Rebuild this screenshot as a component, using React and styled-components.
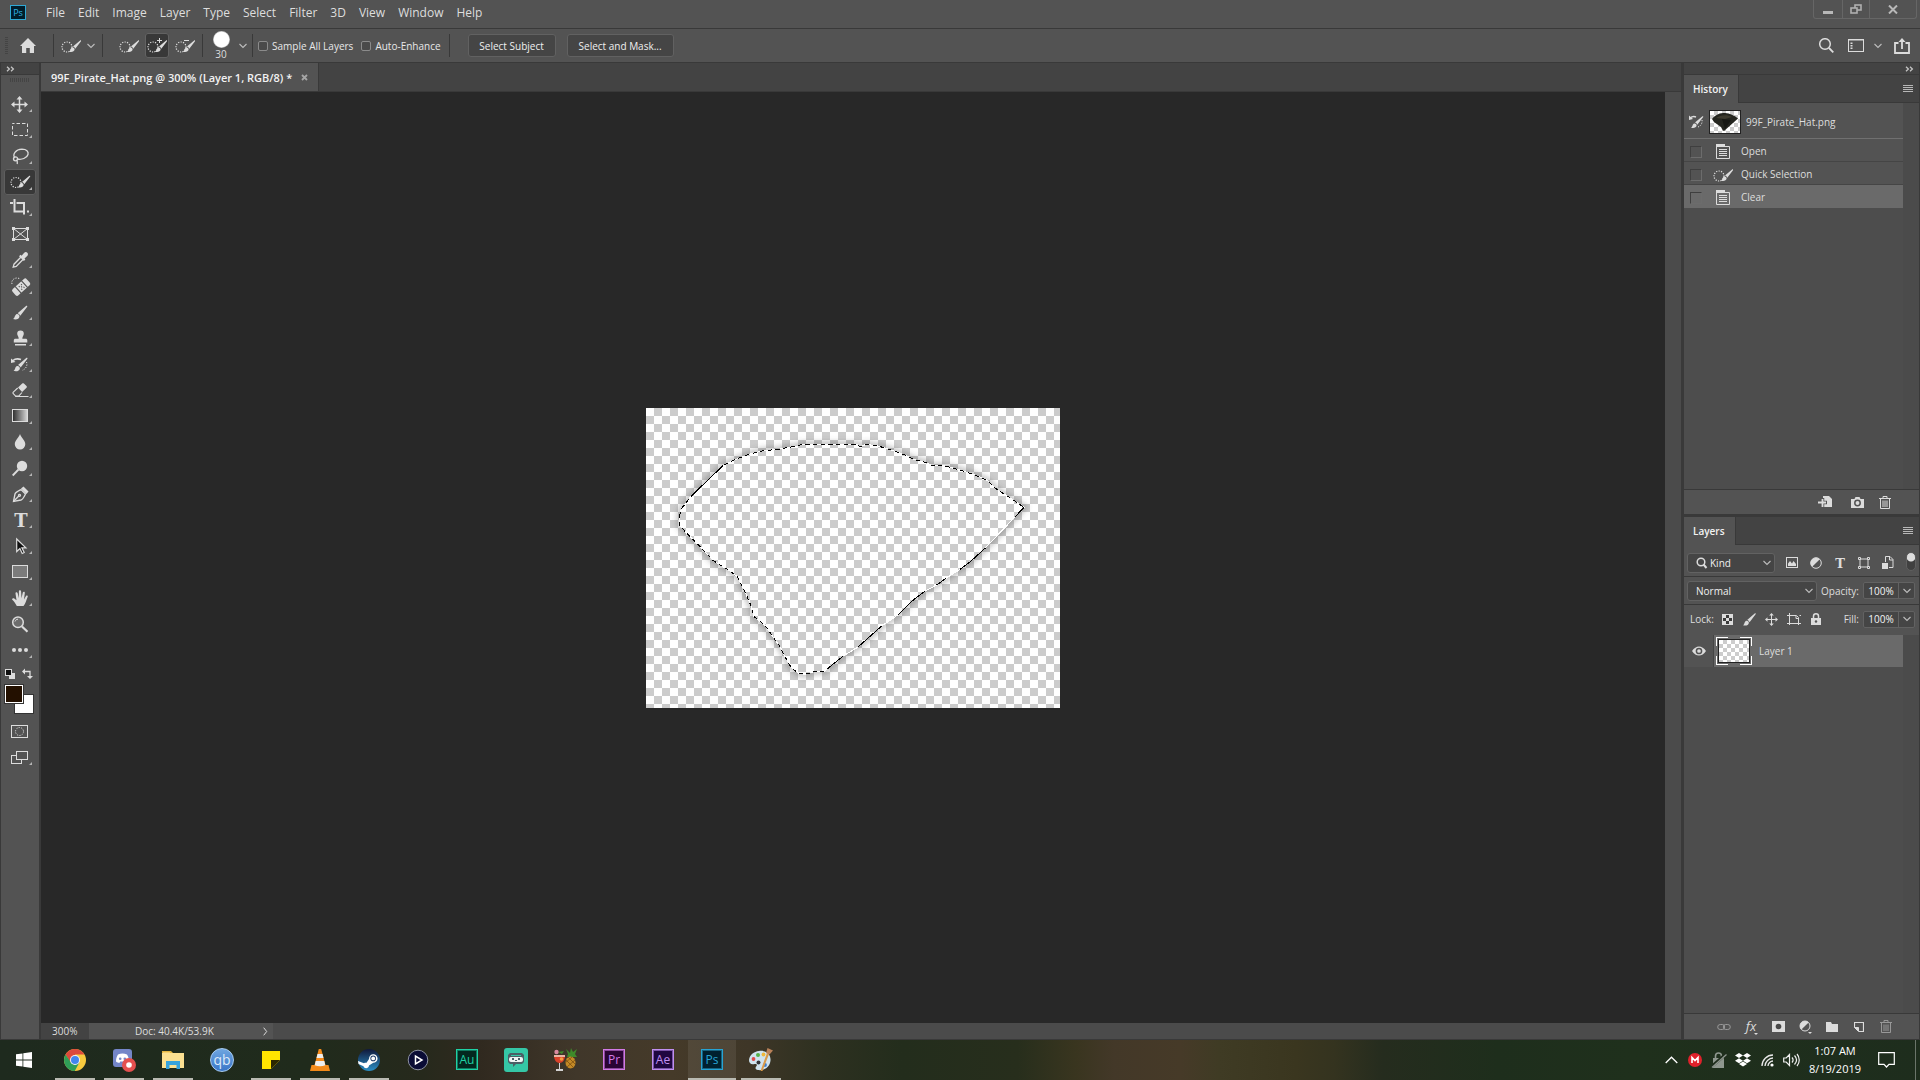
import React from "react";
import styled, { createGlobalStyle, css } from "styled-components";

const c = {
  bar: "#535353",
  header: "#434343",
  line: "#393939",
  trough: "#4b4b4b",
  well: "#4d4d4d",
  field: "#454545",
  text: "#dedede",
  icon: "#dcdcdc",
  pressed: "#383838",
  selected: "#6a6a6a",
  stage: "#282828",
};

const Global = createGlobalStyle`
  *, *::before, *::after { box-sizing: border-box; }
  html, body, #root { height: 100%; }
  body {
    margin: 0;
    overflow: hidden;
    background: ${c.stage};
    color: ${c.text};
    font: 10px/16px "Open Sans", "Noto Sans", sans-serif;
  }
  button, input, select { font: inherit; color: inherit; margin: 0; padding: 0; border: 0; background: none; outline: 0; }
  svg { display: block; flex: none; }
  ul { list-style: none; margin: 0; padding: 0; }
`;

const checker = css`
  background: repeating-conic-gradient(#ccc 0 25%, #fff 0 50%) 0 0 / ${(p) => p.$cell * 2}px ${(p) => p.$cell * 2}px;
`;

/* ---------- shell ---------- */
const Shell = styled.div`
  height: 100vh;
  display: flex;
  flex-direction: column;
`;
const Workspace = styled.div`
  flex: 1;
  min-height: 0;
  display: flex;
  background: ${c.line};
  border-bottom: 1px solid ${c.line};
`;
const IconButton = styled.button`
  display: flex;
  align-items: center;
  justify-content: center;
  flex: none;
  width: ${(p) => p.$w || 24}px;
  height: ${(p) => p.$h || 24}px;
  opacity: ${(p) => (p.$dim ? 0.5 : 1)};
`;

/* ---------- menu bar ---------- */
const MenuBar = styled.header`
  height: 29px;
  flex: none;
  display: flex;
  background: ${c.bar};
  border-bottom: 1px solid ${c.line};
`;
const AppBadge = styled.span`
  display: grid;
  place-items: center;
  width: 16px;
  height: 15px;
  margin: 5px 20px 0 10px;
  border: 1px solid #2fa8d5;
  background: #001d2b;
  color: #31b5e6;
  font-size: 9px;
  line-height: 12px;
`;
const Menus = styled.nav`
  display: flex;
  align-items: flex-start;
  gap: 13px;
  padding-top: 4px;
  flex: 1;
  font-size: 12px;
  line-height: 17px;
`;
const WindowControls = styled.div`
  display: flex;
  height: 19px;
  margin-right: 3px;
  border: 1px solid #666;
  border-top: 0;
  border-radius: 0 0 3px 3px;
`;
const WindowButton = styled(IconButton)`
  height: 18px;
  & + & { border-left: 1px solid #666; }
`;

/* ---------- options bar ---------- */
const OptionsBar = styled.div`
  height: 34px;
  flex: none;
  display: flex;
  align-items: center;
  padding-left: 5px;
  background: ${c.bar};
  border-bottom: 1px solid ${c.line};
`;
const Grip = styled.span`
  flex: none;
  width: 3px;
  height: 18px;
  background: repeating-linear-gradient(#444 0 1px, transparent 1px 2px);
`;
const ToolGrip = styled.span`
  flex: none;
  width: 20px;
  height: 4px;
  margin-top: 3px;
  background: repeating-linear-gradient(to right, #444 0 1px, transparent 1px 2px);
`;
const Divider = styled.span`
  flex: none;
  width: 1px;
  height: 23px;
  margin-left: ${(p) => p.$ml || 0}px;
  background: ${c.line};
`;
const ModeButton = styled(IconButton)`
  width: 24px;
  height: 25px;
  border-radius: 3px;
  ${(p) => p.$on && css`background: ${c.pressed}; box-shadow: inset 0 0 0 1px #626262;`}
`;
const BrushSize = styled.button`
  width: 36px;
  display: flex;
  flex-direction: column;
  align-items: center;
  line-height: 13px;
  &::before {
    content: "";
    width: 17px;
    height: 17px;
    border-radius: 50%;
    background: radial-gradient(circle, #fff 60%, #ffffff66 74%);
  }
`;
const Check = styled.label`
  display: flex;
  align-items: center;
  gap: 4px;
  margin-right: 8px;
  color: #e8e8e8;
  input {
    appearance: none;
    width: 10px;
    height: 10px;
    border: 1px solid #8b8b8b;
    border-radius: 2px;
    background: #4a4a4a;
  }
`;
const TextButton = styled.button`
  width: ${(p) => p.$w}px;
  height: 23px;
  border: 1px solid #616161;
  border-radius: 3px;
  background: ${c.field};
  color: #f0f0f0;
`;
const Push = styled.span`
  flex: 1;
`;
const Row = styled.div`
  display: flex;
  align-items: center;
  gap: ${(p) => p.$gap || 0}px;
  padding: 0 ${(p) => p.$pr ?? p.$px ?? 0}px 0 ${(p) => p.$px || 0}px;
`;

/* ---------- tools ---------- */
const ToolPanel = styled.aside`
  width: 38px;
  flex: none;
  display: flex;
  flex-direction: column;
  align-items: center;
  margin: 0 1px;
  background: ${c.bar};
`;
const Collapse = styled.button`
  width: 100%;
  height: 12px;
  flex: none;
  display: flex;
  align-items: center;
  justify-content: ${(p) => (p.$end ? "flex-end" : "flex-start")};
  padding: 0 5px;
  background: ${c.header};
  border-bottom: 1px solid ${c.line};
`;
const ToolList = styled.div`
  display: flex;
  flex-direction: column;
  padding-top: 9px;
`;
const Tool = styled.button`
  width: 32px;
  height: 26px;
  ${(p) => p.$on && css`
    background: ${c.pressed};
    box-shadow: inset 0 0 0 1px #5e5e5e;
    border-radius: 3px;
  `}
`;
const MiniRow = styled.div`
  width: 32px;
  height: 21px;
  display: flex;
  align-items: center;
  justify-content: space-between;
  padding: 0 3px 0 0;
`;
const Swatches = styled.div`
  position: relative;
  width: 32px;
  height: 34px;
`;
const Swatch = styled.button`
  position: absolute;
  width: 20px;
  height: 20px;
  top: ${(p) => (p.$front ? 0 : 10)}px;
  left: ${(p) => (p.$front ? 0 : 10)}px;
  background: ${(p) => p.$color};
  border: 1px solid #333;
  box-shadow: inset 0 0 0 1px #fff;
`;

/* ---------- document ---------- */
const Document = styled.main`
  flex: 1;
  min-width: 0;
  display: flex;
  flex-direction: column;
  margin: 0 3px 0 1px;
`;
const TabStrip = styled.div`
  height: ${(p) => p.$h}px;
  flex: none;
  display: flex;
  background: ${c.header};
  border-bottom: 1px solid ${c.line};
`;
const Tab = styled.div`
  display: flex;
  align-items: center;
  gap: 9px;
  padding: 1px 10px 0;
  background: ${c.bar};
  border-right: 1px solid ${c.line};
  color: #f2f2f2;
  font-weight: 600;
  font-size: 11px;
`;
const PanelTab = styled.h2`
  display: flex;
  align-items: center;
  margin: 0 0 -1px;
  padding: 0 10px 1px 9px;
  background: ${c.bar};
  border-right: 1px solid ${c.line};
  color: #f2f2f2;
  font-weight: 600;
  font-size: 10px;
`;
const Stage = styled.div`
  flex: 1;
  min-height: 0;
  display: flex;
  background: ${c.stage};
`;
const Viewport = styled.div`
  flex: 1;
  display: flex;
  align-items: center;
  justify-content: center;
`;
const Artboard = styled.div`
  width: 414px;
  height: 300px;
  ${checker}
`;
const ScrollTrack = styled.div`
  width: 16px;
  flex: none;
  background: ${c.trough};
`;
const StatusBar = styled.footer`
  height: 16px;
  flex: none;
  display: flex;
  background: ${c.trough};
`;
const ZoomField = styled.input`
  width: 48px;
  padding-left: 11px;
  background: ${c.header};
`;
const DocInfo = styled.button`
  width: 184px;
  display: flex;
  align-items: center;
  justify-content: space-between;
  padding: 0 5px 0 46px;
  background: ${c.bar};
`;

/* ---------- right docks ---------- */
const Dock = styled.aside`
  width: 236px;
  flex: none;
  display: flex;
  flex-direction: column;
  border-right: 1px solid ${c.line};
`;
const Panel = styled.section`
  display: flex;
  flex-direction: column;
  flex: ${(p) => p.$grow};
  min-height: 0;
  background: ${c.bar};
  margin-bottom: ${(p) => p.$gap || 0}px;
`;
const ListWell = styled.div`
  flex: 1;
  min-height: 0;
  display: flex;
  background: ${c.well};
`;
const List = styled.ul`
  flex: 1;
`;
const Snapshot = styled.li`
  height: 36px;
  display: flex;
  align-items: center;
  gap: 5px;
  padding: 2px 0 0 5px;
  background: ${c.bar};
  border-bottom: 1px solid #707070;
`;
const State = styled.li`
  height: 23px;
  display: flex;
  align-items: center;
  padding: 3px 0 0 6px;
  background: ${(p) => (p.$on ? c.selected : c.bar)};
  border-bottom: 1px solid ${(p) => (p.$on ? c.selected : "#454545")};
  input {
    appearance: none;
    width: 12px;
    height: 12px;
    margin-right: 11px;
    border: 1px solid #6c6c6c;
    border-left-color: #3f3f3f;
    border-top-color: #3f3f3f;
  }
  label { padding: 0 0 2px 8px; }
`;
const Thumb = styled.span`
  display: grid;
  place-items: center;
  width: 32px;
  height: 24px;
  border: 1px solid #222;
  ${checker}
`;
const PanelFooter = styled.footer`
  height: ${(p) => p.$h}px;
  flex: none;
  display: flex;
  align-items: center;
  justify-content: flex-end;
  gap: ${(p) => p.$gap}px;
  padding-right: ${(p) => p.$pr}px;
  border-top: 1px solid ${c.line};
`;
const ControlRow = styled.div`
  height: ${(p) => p.$h}px;
  flex: none;
  display: flex;
  align-items: center;
  padding: ${(p) => p.$pt || 0}px 4px ${(p) => p.$pb || 0}px 3px;
  border-bottom: ${(p) => (p.$plain ? "0" : `1px solid ${c.line}`)};
`;
const SelectBox = styled.label`
  width: ${(p) => p.$w}px;
  height: 20px;
  flex: none;
  display: flex;
  align-items: center;
  gap: ${(p) => p.$gap || 0}px;
  padding: 0 3px 0 8px;
  background: ${c.field};
  border: 1px solid #626262;
  border-radius: 3px;
  select {
    appearance: none;
    flex: 1;
    min-width: 0;
    height: 18px;
    color: #f0f0f0;
  }
`;
const FieldLabel = styled.label`
  flex: 1;
  text-align: right;
  padding-right: 4px;
`;
const NumberBox = styled.span`
  width: 52px;
  height: 17px;
  flex: none;
  display: flex;
  background: ${c.field};
  border: 1px solid #626262;
  border-radius: 2px;
  input {
    width: 35px;
    text-align: center;
    color: #f4f4f4;
    border-right: 1px solid #626262;
  }
  button { width: 15px; display: grid; place-items: center; }
`;
const Toggle = styled.input`
  && {
    appearance: none;
    flex: none;
    width: 10px;
    height: 19px;
    margin: 0 0 3px 6px;
    border-radius: 5px;
    border: 1px solid #606060;
    background: radial-gradient(circle at 4px 4px, #dedede 4px, transparent 5px) #404040;
  }
`;
const LayerRow = styled.li`
  height: 32px;
  display: flex;
  background: ${c.selected};
`;
const EyeCell = styled(IconButton)`
  width: 30px;
  height: 32px;
  background: ${c.bar};
  border-right: 1px solid #454545;
`;
const LayerThumb = styled.span`
  display: grid;
  place-items: center;
  width: 36px;
  height: 28px;
  margin: 2px 7px 2px 2px;
  background:
    linear-gradient(#fff, #fff) 0 0 / 12px 1px, linear-gradient(#fff, #fff) 100% 0 / 12px 1px,
    linear-gradient(#fff, #fff) 0 100% / 12px 1px, linear-gradient(#fff, #fff) 100% 100% / 12px 1px,
    linear-gradient(#fff, #fff) 0 0 / 1px 9px, linear-gradient(#fff, #fff) 100% 0 / 1px 9px,
    linear-gradient(#fff, #fff) 0 100% / 1px 9px, linear-gradient(#fff, #fff) 100% 100% / 1px 9px;
  background-repeat: no-repeat;
`;
const LayerName = styled.span`
  align-self: center;
`;

/* ---------- taskbar ---------- */
const Taskbar = styled.footer`
  height: 40px;
  flex: none;
  display: flex;
  color: #fff;
  background: linear-gradient(to right,
    #1e2a1e 0, #202b1c 16%, #26291c 22%, #30291f 25%, #40372a 30%, #453a29 35%, #3e3627 39%,
    #2d3020 43%, #232d1c 47%, #272e1c 53%, #39351f 56%, #433828 58%, #463a28 61.5%, #3f3b24 63.5%,
    #3a361f 67.5%, #34331f 69.5%, #252c1e 72%, #1e2e1c 78%, #1f301c 85%, #1e2d1d 100%);
`;
const TaskButton = styled.button`
  width: 48px;
  height: 40px;
  flex: none;
  display: grid;
  place-items: center;
  margin-right: ${(p) => (p.$start ? 3 : 1)}px;
  background:
    linear-gradient(#b9bab2, #b9bab2) center bottom / ${(p) => (p.$active ? 48 : p.$open ? 40 : 0)}px 2px no-repeat
    ${(p) => (p.$active ? "#ffffff14" : "transparent")};
`;
const AdobeTile = styled.span`
  display: grid;
  place-items: center;
  width: 22px;
  height: 21px;
  margin-top: -2px;
  border: 1px solid ${(p) => p.$color};
  box-shadow: inset 0 0 0 1px ${(p) => p.$edge};
  background: ${(p) => p.$bg};
  color: ${(p) => p.$color};
  font-size: 12px;
  line-height: 17px;
`;
const QbTile = styled.span`
  display: grid;
  place-items: center;
  width: 24px;
  height: 24px;
  border-radius: 50%;
  border: 1px solid #a9cdf2;
  background: linear-gradient(#6fa6e0, #3a76c8);
  color: #dcebfa;
  font-size: 14px;
  line-height: 18px;
`;
const Clock = styled.button`
  width: 64px;
  font-size: 11px;
  line-height: 18px;
  text-align: center;
`;
const TrayEnd = styled.span`
  width: 5px;
  margin-left: 10px;
  border-left: 1px solid #6b756a;
`;

/* ---------- icon drawings ---------- */
const Draw = ({ w, h, children, ...rest }) => (
  <svg width={w} height={h} viewBox={`0 0 ${w} ${h}`} fill="none" stroke={c.icon} aria-hidden="true" {...rest}>
    {children}
  </svg>
);
const solid = { fill: c.icon, stroke: "none" };

const Chevron = () => (
  <Draw w={8} h={6} stroke="#bdbdbd">
    <path d="M.5 1 4 4.500 7.500 1" strokeWidth="1.100" />
  </Draw>
);
const Collapser = () => (
  <Draw w={9} h={6} stroke="#c4c4c4">
    <path strokeWidth="1.300" d="M1 .7 3.400 3 1 5.300M5 .7 7.400 3 5 5.300" />
  </Draw>
);
const PanelMenu = () => (
  <Draw w={10} h={8} stroke="#b8b8b8"><path d="M0 .5h10M0 2.500h10M0 4.500h10M0 6.500h10" /></Draw>
);

/* A paint brush: bristles at the lower left, handle pointing up and right. */
const BrushShape = ({ x = 0, y = 0, s = 1 }) => (
  <g transform={`translate(${x} ${y}) scale(${s})`} {...solid}>
    <path d="M0 13.600c1.800-.6 1.400-3.400 3-4.600 1.500-1.100 3.600.2 3.500 2.100-.2 2.500-3.500 3.600-6.500 2.500z" />
    <path d="M4.600 7.700 13.300.3c.7-.3 1.200.3.9.9L7.300 10.200C6.800 9 5.900 8.100 4.600 7.700z" />
  </g>
);
const QuickSelect = ({ sign }) => (
  <Draw w={20} h={16}>
    <circle cx="6" cy="9" r="5" strokeDasharray="1.200 1.300" strokeWidth="1.200" />
    <BrushShape x={8} y={2} s={0.86} />
    {sign && <path d={sign === "+" ? "M12.500 0v5M10 2.500h5" : "M9 2.500h5"} />}
  </Draw>
);
const DocPage = () => (
  <Draw w={14} h={15}>
    <path {...solid} d="M0 0h9v3H0z" />
    <path d="M.5.5v14h13v-12H1M3 5.500h8M3 7.500h8M3 9.500h8M3 11.500h8" />
  </Draw>
);
const Trash = () => (
  <Draw w={12} h={13}>
    <path d="M0 2.500h12M4 2V.5h4V2M1.500 3v9.500h9V3M4 4.500v6.500M6 4.500v6.500M8 4.500v6.500" />
  </Draw>
);
const Letter = ({ x, y, size }) => (
  <text x={x} y={y} fill={c.icon} stroke="none" fontSize={size} fontWeight="700" textAnchor="middle" fontFamily="DejaVu Serif">T</text>
);

/* Every tool drawing is laid out on a 32 x 26 cell. */
const toolArt = {
  Move: (
    <g><path d="M8.500 13.500h14M15.500 6.500v14" strokeWidth="1.500" />
      <path {...solid} d="m15.500 5 3 3.500h-6zM15.500 22l3-3.500h-6zM7 13.500l3.500-3v6zM24 13.500l-3.500-3v6z" /></g>
  ),
  Marquee: <rect x="8.500" y="6.500" width="15" height="12" strokeDasharray="3.500 2" strokeDashoffset="1.500" />,
  Lasso: (
    <g strokeWidth="1.300"><path d="M11 15c-3-3.500.5-8.500 7-8.800 4.500 0 6.800 2.500 6 5.300-1 3.700-6.500 5.500-10.500 4.500" />
      <circle cx="11.500" cy="15.800" r="2" /><path d="M12.500 17c1.200 1.200 1 2.500.7 4" /></g>
  ),
  "Quick Selection": (
    <g><circle cx="12" cy="13.500" r="5" strokeDasharray="1.200 1.300" strokeWidth="1.200" /><BrushShape x={14} y={6.500} s={0.86} /></g>
  ),
  Crop: <g strokeWidth="2"><path d="M6 8h3M10.500 4v12.500H21M12.500 8H20v11.500M23 16.500h2" /></g>,
  Frame: (
    <g><rect x="9.500" y="7.500" width="14" height="11" /><path d="m9.500 7.500 14 11M23.500 7.500l-14 11" />
      <path {...solid} d="M8 6h3v3H8zM22 6h3v3h-3zM8 17h3v3H8zM22 17h3v3h-3z" /></g>
  ),
  Eyedropper: (
    <g><path d="m17.500 9.500-7.500 7.700-.8 3 3-.8 7.500-7.600" strokeWidth="1.300" />
      <path {...solid} d="M15 9.300 16.600 7.800l1 .9 2.400-2.800c2.500-2.300 5.300.8 3.200 3.100L20.500 11.400l.9 1.100-1.500 1.400z" /></g>
  ),
  Healing: (
    <g><g transform="rotate(-42 17 14)"><rect x="7.500" y="10" width="19" height="8.500" rx="2" {...solid} />
      <path d="M13 9.500v9.500M21.500 9.500v9.500" stroke={c.bar} strokeWidth="1.200" />
      <path d="M15.500 12.500h1M18.500 12.500h1M17 14.300h1M15.500 16.200h1M18.500 16.200h1" stroke={c.bar} strokeWidth="1.400" /></g>
      <path d="M8 11c-1-3 1.500-6 5-6 1.200 0 2.500.5 3.200 1.200" strokeDasharray="1.200 1.300" /></g>
  ),
  Brush: <BrushShape x={9} y={6.500} s={1} />,
  Stamp: (
    <path {...solid} d="M16.500 5.500a3.300 3.300 0 0 1 3.300 3.300c0 1.700-1.500 2.600-1.500 5h3.200c1.200 0 1.800.6 1.800 1.800v1.900H9.800v-1.900c0-1.200.6-1.800 1.800-1.800h3.100c0-2.400-1.500-3.300-1.500-5a3.300 3.300 0 0 1 3.300-3.300zM11 19h11v1.500H11z" />
  ),
  "History Brush": (
    <g><BrushShape x={9.500} y={6.500} s={0.98} /><path d="M9 9.500c2-1.800 5-2 8-1" strokeWidth="1.600" /><path {...solid} d="M7 7.500v4.500l4.500-1z" />
      <path d="M22.500 11c1 2.500.5 6.500-4.500 8.500" strokeDasharray="1.200 1.400" /></g>
  ),
  Eraser: (
    <g><path {...solid} d="m14 10.500 4.200-4c.5-.5 1.200-.5 1.700 0l2.600 2.600c.5.5.5 1.200 0 1.700l-4.400 4.200z" />
      <path d="m13.700 11-4.400 4.200c-.5.5-.5 1 0 1.500l2.400 2.400h3l3.300-3.600M11 19.500h13.500" strokeWidth="1.100" /></g>
  ),
  Gradient: (
    <g><defs><linearGradient id="ramp"><stop stopColor="#2b2b2b" /><stop offset="1" stopColor="#d8d8d8" /></linearGradient></defs>
      <rect x="8.500" y="6.500" width="15" height="12" fill="url(#ramp)" /></g>
  ),
  Blur: <path {...solid} d="M16 5c1 3.500 5.300 6.500 5.300 10.200a5.200 5.200 0 0 1-10.500 0C10.800 11.500 15 8.500 16 5z" />,
  Dodge: <g><circle cx="18" cy="11" r="5.200" {...solid} /><path d="m14.500 14.500-5.800 6" strokeWidth="1.800" /></g>,
  Pen: (
    <g strokeWidth="1.300"><path d="M9.500 20.500 11 13c.5-2 3.500-3.200 6-4.500l4.500 4.500c-1.200 2.500-2.500 5.500-4.500 6z" /><path d="m9.500 20.500 5.500-5.700" />
      <circle cx="15.500" cy="14.300" r="1" /><path {...solid} d="m17 7.500 2.500-2 5 5-2 2.500z" /></g>
  ),
  Type: <Letter x={17} y={20} size={18} />,
  "Path Selection": <path d="M12.700 6v12.500l3.200-3 2.300 5 2-1-2.300-4.700h4z" fill="#111" strokeWidth="1.200" />,
  Rectangle: <rect x="8.500" y="6.500" width="15" height="12" fill="#7b7b7b" />,
  Hand: (
    <path {...solid} d="M12.800 21C11.500 18.500 10 16.500 8.300 14.800c-.8-1.200.8-2.200 2-1.200l2.200 1.700-1-6.800c-.2-1.500 1.700-1.800 2.100-.4l1.200 5.200.1-7c0-1.500 2.100-1.500 2.200 0l.4 7 1.300-5.800c.4-1.400 2.300-1 2 .4l-.8 6.500 2-3.500c.8-1.100 2.200-.3 1.700.9-1.500 3.300-2 7-4.200 9.200h-5z" />
  ),
  Zoom: <g><circle cx="14" cy="11.300" r="5.300" strokeWidth="1.500" fill="#6c6c6c" /><path d="M11 10.500c.5-1.500 1.500-2.200 3-2.300" /><path d="m18 15.500 5.500 5.300" strokeWidth="2.200" /></g>,
  "Edit Toolbar": <g {...solid}><circle cx="10" cy="13" r="2" /><circle cx="16" cy="13" r="2" /><circle cx="22" cy="13" r="2" /></g>,
};
const noFlyout = ["Frame", "Zoom"];
const Corner = () => <path fill="#b5b5b5" stroke="none" d="M28 18v3h-3z" />;

const Marquee = () => {
  const top = "M148 378 155 355 184 318 240 264 280 226 312 210 360 192 400 182 445 178 470 173 505 168 515 163 680 163 690 171 708 163 745 168 790 182 825 195 850 208 890 218 905 226 945 228 990 240 1030 253 1070 270 1100 298 1135 320 1182 352";
  const right = "1155 381 1066 474 1020 516 990 538 948 565 920 585 885 603 850 630 805 674 755 708 683 772 640 798 600 830";
  const left = "585 843 550 846 525 853 505 850 483 832 465 800 450 770 425 735 405 706 372 680 362 645 345 605 322 560 295 540 250 512 215 475 180 440 150 408 148 378";
  return (
    <svg width="414" height="300" viewBox="48 54 1242 900" fill="none" strokeWidth="3" role="img" aria-label="Selection">
      <defs>
        <filter id="soft"><feGaussianBlur stdDeviation="8" /></filter>
        <mask id="outside" maskUnits="userSpaceOnUse" x="48" y="54" width="1242" height="900">
          <rect x="48" y="54" width="1242" height="900" fill="#fff" />
          <path d={`${top} ${right} ${left}z`} fill="#000" />
        </mask>
      </defs>
      <g mask="url(#outside)">
        <path d={`${top} ${right} ${left}z`} stroke="#555" strokeOpacity=".32" strokeWidth="20" filter="url(#soft)" />
      </g>
      <g shapeRendering="crispEdges">
        <path d={`${top} ${right} ${left}z`} stroke="#fff" />
        <path d={top} stroke="#000" strokeDasharray="13 10" />
        <path d={`M600 830 ${left}`} stroke="#000" strokeDasharray="12 10" />
        <path stroke="#000" d="M184 318 240 264 280 226M1182 352 1155 381M1066 474 1020 516 990 538M948 565 920 585M885 603 850 630 805 674M755 708 683 772M640 798 600 830" />
      </g>
    </svg>
  );
};

/* ---------- taskbar drawings ---------- */
const taskArt = {
  Start: (
    <Draw w={16} h={16}><path fill="#fff" stroke="none" d="M0 2.300 6.500 1.400v6.100H0zM7.300 1.300 16 0v7.500H7.300zM0 8.400h6.500v6.200L0 13.700zM7.300 8.400H16V16l-8.700-1.300z" /></Draw>
  ),
  Chrome: (
    <Draw w={22} h={22} stroke="none">
      <circle cx="11" cy="11" r="11" fill="#f7ca3e" />
      <path fill="#dc4a3c" d="M11 11 1.500 5.500A11 11 0 0 1 20.500 5.500H11z" /><path fill="#dc4a3c" d="M1.500 5.500 7 14.500 11 5.500z" />
      <path fill="#2f9e57" d="M1.500 5.500A11 11 0 0 0 10.800 22l4.500-8.500H7z" />
      <circle cx="11" cy="11" r="5" fill="#f4f4f4" /><circle cx="11" cy="11" r="4" fill="#4286ee" />
    </Draw>
  ),
  Discord: (
    <Draw w={24} h={24} stroke="none">
      <path fill="#7486c9" d="M4 1h13a3 3 0 0 1 3 3v17l-4-2H4a3 3 0 0 1-3-3V4a3 3 0 0 1 3-3z" />
      <path fill="#fff" d="M6 6.500c3-1.400 6-1.400 9 0 1.500 2.500 2 4.500 2 7-1.200 1-2.200 1.300-3.300 1.400l-.8-1.400H8.200l-.8 1.400C6.200 14.800 5.200 14.500 4 13.500c0-2.500.5-4.500 2-7z" />
      <circle cx="8.200" cy="10.700" r="1.300" fill="#7486c9" /><circle cx="12.800" cy="10.700" r="1.300" fill="#7486c9" />
      <circle cx="17" cy="17" r="7" fill="#e4504f" /><circle cx="17" cy="17" r="2.800" fill="#fff" />
    </Draw>
  ),
  "File Explorer": (
    <Draw w={22} h={20} stroke="none">
      <path fill="#e3b542" d="M0 1h9l2 2H0z" /><path fill="#fbe091" d="M0 3h22v15H0z" /><path fill="#f3cf6e" d="M1 2h7v1H1z" />
      <path fill="#36a3dc" d="M4 11h14v8h-3.500v-4h-7v4H4z" />
    </Draw>
  ),
  qBittorrent: <QbTile>qb</QbTile>,
  "Sticky Notes": (
    <Draw w={18} h={18} stroke="none"><path fill="#ffe400" d="M0 0h18v9l-9 9H0z" /><path fill="#2b2800" d="M9 18V9h9z" /></Draw>
  ),
  VLC: (
    <Draw w={20} h={22} stroke="none">
      <path fill="#f28a1a" d="M1.500 16h17l1.500 6H0z" /><path fill="#f58b1c" d="M8.800 0h2.400L16 18H4z" />
      <path fill="#eee" d="M7.500 5h5l1 4h-7zM5.700 12h8.600l1 4.300c-3 1.300-7.500 1.300-10.600 0z" />
    </Draw>
  ),
  Steam: (
    <Draw w={22} h={22} stroke="none">
      <defs><linearGradient id="steam" x2="0" y2="1"><stop stopColor="#10183a" /><stop offset="1" stopColor="#2a8ec4" /></linearGradient></defs>
      <circle cx="11" cy="11" r="11" fill="url(#steam)" />
      <path fill="#fff" d="m0 12 6 2.200c.8-.6 1.800-.6 2.500-.5L11 10c0-3.200 2-4.800 4.300-4.800a4.200 4.200 0 0 1 0 8.500L11 16.500c-.3 3.300-4.800 3.500-5.500.7L.5 15z" />
      <circle cx="15.200" cy="9.400" r="2.800" fill="#1b3a66" /><circle cx="15.200" cy="9.400" r="1.900" fill="#fff" />
    </Draw>
  ),
  Player: (
    <Draw w={22} h={22}>
      <circle cx="11" cy="11" r="9.800" fill="#0a0c35" stroke="#8b90a0" /><path d="M8.500 7v8l6.500-4z" stroke="#fff" strokeWidth="1.500" />
    </Draw>
  ),
  Audition: <AdobeTile $color="#1fd1a5" $edge="#0f7a60" $bg="#03281f">Au</AdobeTile>,
  Streamlabs: (
    <Draw w={24} h={24} stroke="none">
      <rect width="24" height="24" rx="3" fill="#35c7a6" /><path fill="#4b5f66" d="M6 5h12l2 2v7l-2 2h-6l-3 3v-3H6l-2-2V7z" />
      <path fill="#35c7a6" d="M7 7h10v1H7z" /><rect x="5" y="9" width="14" height="5" rx="2" fill="#f0f4f4" />
      <path fill="#4b5f66" d="M8 10h2v2H8zM14 10h2v2h-2zM11 12h2v1h-2z" />
    </Draw>
  ),
  Cocktail: (
    <Draw w={24} h={24} stroke="none">
      <path fill="#3f8a2a" d="M13 1l4 4 1-5 2 4 4-3-2 5 2 3H14l1-3zM5 4l6-1-2 3z" /><ellipse cx="17.500" cy="14.500" rx="5" ry="6" fill="#c48a26" />
      <path stroke="#7d4f12" strokeWidth=".8" d="m13 12 8 8M15 9l7 7M22 12l-8 7M19 9l-7 6" />
      <circle cx="3.500" cy="4" r="2.200" fill="#d98aa0" /><path fill="#d8412a" d="M1 7h11c0 4-1.500 8-5.500 8S1 11 1 7z" />
      <path fill="#e9b4a4" d="M1 7h11v2H1z" /><path fill="#d3d3d3" d="M6 15h1v6h3v2H3v-2h3z" /><circle cx="8.500" cy="11" r="1.800" fill="#f39a3c" />
    </Draw>
  ),
  Premiere: <AdobeTile $color="#d27ae6" $edge="#8a4a9c" $bg="#2a0434">Pr</AdobeTile>,
  "After Effects": <AdobeTile $color="#c08ff0" $edge="#7a55a8" $bg="#1f0740">Ae</AdobeTile>,
  Photoshop: <AdobeTile $color="#27a3d4" $edge="#17627f" $bg="#00202f">Ps</AdobeTile>,
  Paint: (
    <Draw w={24} h={24} stroke="none">
      <path fill="#cfe3ef" d="M10 3c7-1 12 3 11.500 9.500C21 19 15 23 9 22c-3-.5-3-2.500-1.500-4 1-1.200 0-2.500-2-2C2 17 0 15 0 12 .5 7 5 3.500 10 3z" />
      <circle cx="9" cy="7" r="2" fill="#56b24a" /><circle cx="14.500" cy="6.500" r="1.900" fill="#f0b73a" /><circle cx="4.500" cy="11" r="1.900" fill="#dd4a4a" />
      <circle cx="9.500" cy="14.500" r="2" fill="#31343a" /><circle cx="16" cy="17" r="1.900" fill="#3a7fd0" />
      <path fill="#d99a4a" d="M11.500 23 18 5l2 1-6.500 17z" /><path fill="#b98159" d="m17 5 1.500-5L24 2.500 20.500 6.500z" />
    </Draw>
  ),
};
const open = ["Chrome", "Discord", "File Explorer", "Sticky Notes", "VLC", "Steam", "Photoshop", "Paint"];

const menus = ["File", "Edit", "Image", "Layer", "Type", "Select", "Filter", "3D", "View", "Window", "Help"];

function OptionBar() {
  return (
    <OptionsBar>
      <Grip />
      <IconButton $w={40} aria-label="Home">
        <Draw w={16} h={15}><path {...solid} d="M8 0l8 8h-2v7H9.800v-5H6.200v5H2V8H0z" /></Draw>
      </IconButton>
      <Divider $ml={5} />
      <IconButton $w={48} aria-label="Tool preset">
        <Row $gap={6}><QuickSelect /><Chevron /></Row>
      </IconButton>
      <Divider />
      <Row $gap={4} $px={14} $pr={5}>
        <ModeButton aria-label="New selection"><QuickSelect /></ModeButton>
        <ModeButton $on aria-label="Add to selection"><QuickSelect sign="+" /></ModeButton>
        <ModeButton aria-label="Subtract from selection"><QuickSelect sign="-" /></ModeButton>
      </Row>
      <Divider />
      <BrushSize aria-label="Brush size 30">30</BrushSize>
      <IconButton $w={8} aria-label="Brush options"><Chevron /></IconButton>
      <Divider $ml={5} />
      <Row $px={5} $pr={0}>
        <Check><input type="checkbox" />Sample All Layers</Check>
        <Check><input type="checkbox" />Auto-Enhance</Check>
      </Row>
      <Divider />
      <Row $gap={11} $px={18}>
        <TextButton $w={88}>Select Subject</TextButton>
        <TextButton $w={107}>Select and Mask...</TextButton>
      </Row>
      <Push />
      <IconButton $w={28} aria-label="Search">
        <Draw w={15} h={15}><circle cx="6" cy="6" r="5.300" strokeWidth="1.500" /><path d="m10 10 4.300 4.300" strokeWidth="1.800" /></Draw>
      </IconButton>
      <IconButton $w={32} aria-label="Workspace">
        <Draw w={16} h={13}><rect x=".5" y=".5" width="15" height="12" /><path d="M0 1h16" /><path d="M3.500 3.500v1.500M3.500 6v1.500M3.500 8.500V10" strokeWidth="2" /></Draw>
      </IconButton>
      <IconButton $w={12} aria-label="Workspace list"><Chevron /></IconButton>
      <IconButton $w={36} aria-label="Share">
        <Draw w={16} h={16}><path d="M4.500 5H1v10h14V5h-3.500M8 11V2" strokeWidth="1.800" /><path {...solid} d="M8 0l3.500 4h-7z" /></Draw>
      </IconButton>
    </OptionsBar>
  );
}

function Tools() {
  return (
    <ToolPanel>
      <Collapse aria-label="Collapse tools"><Collapser /></Collapse>
      <ToolGrip />
      <ToolList>
        {Object.entries(toolArt).map(([name, art]) => (
          <Tool key={name} $on={name === "Quick Selection"} aria-label={name}>
            <Draw w={32} h={26}>{art}{!noFlyout.includes(name) && <Corner />}</Draw>
          </Tool>
        ))}
      </ToolList>
      <MiniRow>
        <IconButton $w={12} $h={12} aria-label="Default colors">
          <Draw w={10} h={10}><path {...solid} d="M4 4h6v6H4z" /><rect x=".5" y=".5" width="6" height="6" fill="#111" /></Draw>
        </IconButton>
        <IconButton $w={12} $h={12} aria-label="Swap colors">
          <Draw w={11} h={11}><path d="M2 3.500h6v5" strokeWidth="1.300" /><path {...solid} d="M0 3.500 3 .5v6zM8 11 5 8h6z" /></Draw>
        </IconButton>
      </MiniRow>
      <Swatches>
        <Swatch $color="#fff" aria-label="Background color" />
        <Swatch $front $color="#231000" aria-label="Foreground color" />
      </Swatches>
      <Tool aria-label="Quick mask">
        <Draw w={32} h={26}><rect x="7.500" y="7.500" width="16" height="12" /><circle cx="15.500" cy="13.500" r="4" strokeDasharray="1.200 1.300" /></Draw>
      </Tool>
      <Tool aria-label="Screen mode">
        <Draw w={32} h={26}><rect x="7.500" y="11.500" width="10" height="8" /><rect x="12.500" y="7.500" width="11" height="8" fill={c.bar} /><Corner /></Draw>
      </Tool>
    </ToolPanel>
  );
}

function History() {
  return (
    <Panel $grow="0 0 439px" $gap={3}>
      <TabStrip $h={28}><PanelTab>History</PanelTab><Push /><IconButton $w={22} $h={27} aria-label="History menu"><PanelMenu /></IconButton></TabStrip>
      <ListWell>
        <List>
          <Snapshot>
            <Draw w={15} h={15}><BrushShape x={2} y={2} s={0.86} /><path d="M1 4c2-1.500 4-1.800 6-1" strokeWidth="1.500" /><path {...solid} d="M0 1.500V6l4-1z" /><path d="M13 6c.5 3-1 6-4 7" strokeDasharray="1.200 1.300" /></Draw>
            <Thumb $cell={4}>
              <Draw w={26} h={18} stroke="none">
                <path fill="#24251f" d="M0 6c4-5 8-6 13-6 5 .5 9 2 13 5.500L12 18c-1-.3-2-2-3-4L2 9z" />
                <path fill="#3d3b2f" d="M4 5c4-3 11-4 16-1l-7 2z" /><path fill="#171814" d="m10 6 3 10 6-9z" />
              </Draw>
            </Thumb>
            <span>99F_Pirate_Hat.png</span>
          </Snapshot>
          <State><input type="checkbox" id="h1" /><Row $px={3}><DocPage /></Row><label htmlFor="h1">Open</label></State>
          <State><input type="checkbox" id="h2" /><QuickSelect /><label htmlFor="h2">Quick Selection</label></State>
          <State $on><input type="checkbox" id="h3" /><Row $px={3}><DocPage /></Row><label htmlFor="h3">Clear</label></State>
        </List>
        <ScrollTrack />
      </ListWell>
      <PanelFooter $h={25} $gap={4} $pr={24}>
        <IconButton $w={28} aria-label="New document from state">
          <Draw w={14} h={12}><path {...solid} d="M5 0h6l3 3v8H5z" /><path d="M0 6.500h9M4.500 2v9" stroke={c.bar} strokeWidth="3.500" /><path d="M0 6.500h8M4.500 3v8" strokeWidth="1.800" /></Draw>
        </IconButton>
        <IconButton $w={28} aria-label="New snapshot">
          <Draw w={13} h={11}><path {...solid} d="M0 2h3.500l1-2h4l1 2H13v9H0z" /><circle cx="6.500" cy="6" r="2.700" stroke={c.bar} strokeWidth="1.500" /></Draw>
        </IconButton>
        <IconButton $w={20} aria-label="Delete state"><Trash /></IconButton>
      </PanelFooter>
    </Panel>
  );
}

const filters = {
  "Pixel layers": <Draw w={12} h={11}><rect x=".5" y=".5" width="11" height="10" /><path {...solid} d="M2 9V6.500L4 4l2 2.500L7.500 4 10 7v2z" /></Draw>,
  "Adjustment layers": <Draw w={12} h={12}><circle cx="6" cy="6" r="5.300" /><path {...solid} d="M9.800 2.200A5.300 5.300 0 0 0 2.200 9.800z" /></Draw>,
  "Type layers": <Draw w={20} h={20}><Letter x={10} y={15} size={13} /></Draw>,
  "Shape layers": <Draw w={12} h={12}><rect x="2" y="2" width="8" height="8" /><path fill={c.bar} d="M.5.5h2v2h-2zM9.500.5h2v2h-2zM.5 9.500h2v2h-2zM9.500 9.500h2v2h-2z" /></Draw>,
  "Smart objects": <Draw w={12} h={13}><path d="M3.500 6V.5H8l3 3v8H7M7.500 1v3H11" /><path {...solid} d="M0 7h6v6H0z" /></Draw>,
};
const locks = {
  "Lock transparency": <Draw w={11} h={11}><path {...solid} d="M0 0h11v11H0z" /><path fill="#3c3c3c" stroke="none" d="M4 1h3v3H4zM1 4h3v3H1zM7 4h3v3H7zM4 7h3v3H4z" /></Draw>,
  "Lock pixels": <Draw w={13} h={13}><BrushShape s={0.9} /></Draw>,
  "Lock position": <Draw w={13} h={13}><path d="M1 6.500h11M6.500 1v11" /><path {...solid} d="m6.500 0 2.300 2.500H4.200zM6.500 13l2.300-2.500H4.200zM0 6.500l2.500-2.300v4.600zM13 6.500l-2.500-2.300v4.600z" /></Draw>,
  "Lock artboard": <Draw w={14} h={12}><path d="M2.500 0v12M0 2.500h9.500l2 2V12M0 10.500h14M9 3v2.500h2.500M12.500 2.500H14" /></Draw>,
  "Lock all": <Draw w={10} h={12}><path {...solid} d="M0 5h10v7H0z" /><path d="M2.500 5V3.300a2.500 2.500 0 0 1 5 0V5" strokeWidth="1.500" /><circle cx="5" cy="8.500" r="1.200" fill={c.bar} stroke="none" /></Draw>,
};
const layerActions = {
  "Link layers": <Draw w={14} h={8}><rect x=".7" y="1.500" width="7" height="5" rx="2.500" /><rect x="6.300" y="1.500" width="7" height="5" rx="2.500" /></Draw>,
  "Layer style": <Draw w={24} h={24}><text x="12" y="16" fontFamily="Open Sans" fontStyle="italic" fontSize="13" textAnchor="middle" fill={c.icon} stroke="none">fx</text><path {...solid} d="M15 18h4l-2 2z" /></Draw>,
  "Layer mask": <Draw w={13} h={11}><path {...solid} d="M0 0h13v11H0z" /><circle cx="6.500" cy="5.500" r="2.800" fill="#484848" stroke="none" /></Draw>,
  "Adjustment layer": <Draw w={14} h={15}><circle cx="7" cy="7" r="5" /><path {...solid} d="M10.600 3.400A5 5 0 0 0 3.400 10.600z" /><path {...solid} d="M10 13h4l-2 2z" /></Draw>,
  "New group": <Draw w={12} h={10}><path {...solid} d="M0 0h5l1 2h6v8H0z" /></Draw>,
  "New layer": <Draw w={10} h={10}><path d="M.5 4V.5h9v9H5" strokeWidth="1.200" /><path d="M.5 4v1.500l4 4V5.500h-4" fill={c.icon} /></Draw>,
  "Delete layer": <Trash />,
};

function Layers() {
  return (
    <Panel $grow="1">
      <TabStrip $h={28}><PanelTab>Layers</PanelTab><Push /><IconButton $w={22} $h={27} aria-label="Layers menu"><PanelMenu /></IconButton></TabStrip>
      <ControlRow $h={32} $pt={4}>
        <SelectBox $w={88} $gap={2}>
          <Draw w={12} h={12}><circle cx="5" cy="5" r="3.800" strokeWidth="1.500" /><path d="m7.500 7.500 3 3.500" strokeWidth="2" /></Draw>
          <select aria-label="Filter type"><option>Kind</option></select><Chevron />
        </SelectBox>
        <Row $px={5} $pr={0}>{Object.entries(filters).map(([n, art]) => <IconButton key={n} $w={24} $h={20} aria-label={n}>{art}</IconButton>)}</Row>
        <Toggle type="checkbox" aria-label="Filter layers" defaultChecked />
      </ControlRow>
      <ControlRow $h={28}>
        <SelectBox $w={130}><select aria-label="Blend mode"><option>Normal</option></select><Chevron /></SelectBox>
        <FieldLabel htmlFor="opacity">Opacity:</FieldLabel>
        <NumberBox><input id="opacity" defaultValue="100%" /><button aria-label="Opacity slider"><Chevron /></button></NumberBox>
      </ControlRow>
      <ControlRow $h={30} $pb={2} $plain>
        <Row $px={3}>Lock:</Row>
        <Row>{Object.entries(locks).map(([n, art]) => <IconButton key={n} $w={22} $h={20} aria-label={n}>{art}</IconButton>)}</Row>
        <FieldLabel htmlFor="fill">Fill:</FieldLabel>
        <NumberBox><input id="fill" defaultValue="100%" /><button aria-label="Fill slider"><Chevron /></button></NumberBox>
      </ControlRow>
      <ListWell>
        <List>
          <LayerRow>
            <EyeCell aria-label="Toggle visibility">
              <Draw w={14} h={10}><path {...solid} d="M0 5c4-6 10-6 14 0-4 6-10 6-14 0z" /><circle cx="7" cy="5" r="2.600" fill={c.icon} stroke={c.bar} strokeWidth="1.500" /></Draw>
            </EyeCell>
            <LayerThumb><Thumb $cell={4} /></LayerThumb>
            <LayerName>Layer 1</LayerName>
          </LayerRow>
        </List>
        <ScrollTrack />
      </ListWell>
      <PanelFooter $h={26} $gap={3} $pr={21}>
        {Object.entries(layerActions).map(([n, art]) => <IconButton key={n} $w={24} $dim={/Link|Delete/.test(n)} aria-label={n}>{art}</IconButton>)}
      </PanelFooter>
    </Panel>
  );
}

function SystemBar() {
  return (
    <Taskbar>
      {Object.entries(taskArt).map(([name, art]) => (
        <TaskButton key={name} $start={name === "Start"} $open={open.includes(name)} $active={name === "Photoshop"} aria-label={name}>{art}</TaskButton>
      ))}
      <Push />
      <IconButton $h={40} aria-label="Hidden icons"><Draw w={13} h={8} stroke="#fff"><path d="M.7 7 6.500 1.200 12.300 7" strokeWidth="1.300" /></Draw></IconButton>
      <IconButton $h={40} aria-label="Mega"><Draw w={14} h={14}><circle cx="7" cy="7" r="7" fill="#e0212b" stroke="none" /><path d="M4 10V4.500l3 3 3-3V10" stroke="#fff" strokeWidth="1.600" /></Draw></IconButton>
      <IconButton $h={40} aria-label="Security"><Draw w={16} h={16} stroke="#8f978f"><path fill="#8f978f" stroke="none" d="M2 6h11v10H2z" /><path d="M4.500 6V4a3 3 0 0 1 6 0v2" strokeWidth="1.600" /><path d="M0 15 15 2" stroke="#1f2d1d" strokeWidth="3" /><path d="M1 15.500 15.500 2.500" strokeWidth="1.300" /></Draw></IconButton>
      <IconButton $h={40} aria-label="Dropbox"><Draw w={16} h={14}><path fill="#fff" stroke="none" d="M4 0l4 2.500L4 5 0 2.500zM12 0l4 2.500L12 5 8 2.500zM4 5.200l4 2.500-4 2.500L0 7.700zM12 5.200l4 2.500-4 2.500-4-2.500zM8 8.600l4 2.500L8 13.600l-4-2.500z" /></Draw></IconButton>
      <IconButton $h={40} aria-label="Network"><Draw w={13} h={13} stroke="#e8e8e8"><path d="M1 12C1 6 6 1 12 1M4 12c0-4 4-8 8-8M7 12c0-2.500 2.500-5 5-5" strokeWidth="1.300" /><circle cx="11" cy="11" r="1.600" fill="#fff" stroke="none" /></Draw></IconButton>
      <IconButton $h={40} aria-label="Volume"><Draw w={17} h={14} stroke="#f0f0f0"><path d="M.7 5h2.500L6.500 1.500v11L3.200 9H.7zM9 4.500c1.300 1.500 1.300 3.500 0 5M11.500 2.500c2.500 2.700 2.500 6.300 0 9M14 1c3 3.500 3 8.500 0 12" strokeWidth="1.200" /></Draw></IconButton>
      <Clock>1:07 AM<br />8/19/2019</Clock>
      <IconButton $w={38} $h={40} aria-label="Notifications"><Draw w={17} h={16} stroke="#fff"><path d="M.7.7h15.600v11.600H11L8.500 15 6 12.300H.7z" strokeWidth="1.200" /></Draw></IconButton>
      <TrayEnd />
    </Taskbar>
  );
}

export default function App() {
  return (
    <Shell>
      <Global />
      <MenuBar>
        <AppBadge>Ps</AppBadge>
        <Menus>{menus.map((m) => <button key={m}>{m}</button>)}</Menus>
        <WindowControls>
          <WindowButton $w={28} aria-label="Minimize"><Draw w={10} h={10}><path d="M0 8.500h10" stroke="#b8b8b8" strokeWidth="3" /></Draw></WindowButton>
          <WindowButton $w={27} aria-label="Restore"><Draw w={12} h={10} stroke="#b0b0b0"><rect x="5" y="1" width="6" height="5" strokeWidth="1.600" /><rect x="1" y="4" width="6" height="5" strokeWidth="1.600" fill={c.bar} /></Draw></WindowButton>
          <WindowButton $w={47} aria-label="Close"><Draw w={10} h={9} stroke="#b8b8b8"><path d="m1 .5 8 8M9 .5l-8 8" strokeWidth="2" /></Draw></WindowButton>
        </WindowControls>
      </MenuBar>
      <OptionBar />
      <Workspace>
        <Tools />
        <Document>
          <TabStrip $h={29}>
            <Tab>
              <span>99F_Pirate_Hat.png @ 300% (Layer 1, RGB/8) *</span>
              <IconButton $w={7} $h={16} aria-label="Close document"><Draw w={7} h={7} stroke="#a5a5a5"><path d="m1 1 5 5M6 1 1 6" strokeWidth="1.800" /></Draw></IconButton>
            </Tab>
          </TabStrip>
          <Stage>
            <Viewport><Artboard $cell={8}><Marquee /></Artboard></Viewport>
            <ScrollTrack />
          </Stage>
          <StatusBar>
            <ZoomField aria-label="Zoom level" defaultValue="300%" />
            <DocInfo>Doc: 40.4K/53.9K<Draw w={5} h={9}><path d="m.7.7 3 3.800-3 3.800" /></Draw></DocInfo>
          </StatusBar>
        </Document>
        <Dock>
          <Collapse $end aria-label="Collapse panels"><Collapser /></Collapse>
          <History />
          <Layers />
        </Dock>
      </Workspace>
      <SystemBar />
    </Shell>
  );
}
